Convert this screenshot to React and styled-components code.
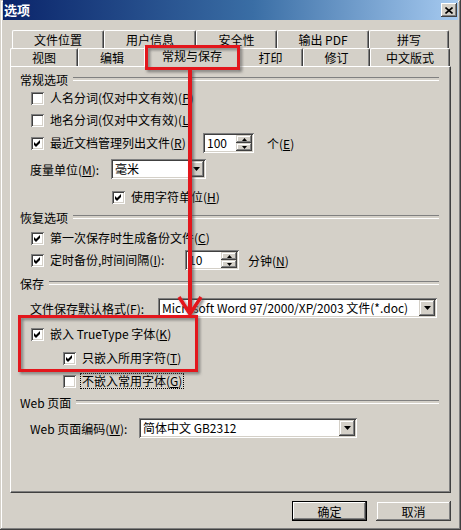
import React from "react";
import styled, { createGlobalStyle } from "styled-components";

const GlobalStyle = createGlobalStyle`
  html, body {
    margin: 0;
    padding: 0;
    background: #d4d0c8;
  }
  body {
    font-family: "Noto Sans CJK SC", "Liberation Sans", sans-serif;
    font-size: 12px;
    color: #000;
  }
  * {
    box-sizing: border-box;
  }
`;

const backTabs = [
  { label: "文件位置", w: 92 },
  { label: "用户信息", w: 92 },
  { label: "安全性", w: 81 },
  { label: "输出 PDF", w: 92 },
  { label: "拼写", w: 80 },
];

const frontTabs = [
  { label: "视图", w: 68 },
  { label: "编辑", w: 68 },
  { label: "常规与保存", w: 92, selected: true },
  { label: "打印", w: 65 },
  { label: "修订", w: 67 },
  { label: "中文版式", w: 80 },
];

const Check = ({ checked }) => (
  <CheckBox>
    {checked && (
      <svg width="13" height="13" viewBox="0 0 13 13">
        <polygon points="3,5 5,7 9,3 9,6 5,10 3,8" fill="#000" />
      </svg>
    )}
  </CheckBox>
);

const SpinBox = ({ value, w }) => (
  <SpinField $w={w}>
    <FieldText>{value}</FieldText>
    <SpinButtons>
      <SpinBtn>
        <svg width="5" height="3" viewBox="0 0 5 3">
          <polygon points="2.5,0 5,3 0,3" fill="#000" />
        </svg>
      </SpinBtn>
      <SpinBtn>
        <svg width="5" height="3" viewBox="0 0 5 3">
          <polygon points="0,0 5,0 2.5,3" fill="#000" />
        </svg>
      </SpinBtn>
    </SpinButtons>
  </SpinField>
);

const Combo = ({ value, w }) => (
  <ComboField $w={w}>
    <FieldText>{value}</FieldText>
    <DropBtn>
      <svg width="7" height="4" viewBox="0 0 7 4">
        <polygon points="0,0 7,0 3.5,4" fill="#000" />
      </svg>
    </DropBtn>
  </ComboField>
);

const App = () => {
  return (
    <>
      <GlobalStyle />
      <Window>
        <TitleBar>
          <Title>选项</Title>
          <CloseButton>
            <svg width="8" height="7" viewBox="0 0 8 7">
              <path d="M0.5 0.5 L7.5 6.5 M7.5 0.5 L0.5 6.5" stroke="#000" strokeWidth="1.6" />
            </svg>
          </CloseButton>
        </TitleBar>

        <Body>
          <TabStrip>
            <TabRow $back>
              {backTabs.map((t) => (
                <Tab key={t.label} $w={t.w}>
                  {t.label}
                </Tab>
              ))}
            </TabRow>
            <TabRow>
              {frontTabs.map((t) => (
                <Tab key={t.label} $w={t.w} $selected={t.selected}>
                  {t.label}
                </Tab>
              ))}
            </TabRow>
          </TabStrip>

          <Panel>
            <Legend $mt={2}>常规选项</Legend>
            <Row $mt={-1} $indent={20}>
              <Check />
              <Label>人名分词(仅对中文有效)(<u>P</u>)</Label>
            </Row>
            <Row $mt={2} $indent={20}>
              <Check />
              <Label>地名分词(仅对中文有效)(<u>L</u>)</Label>
            </Row>
            <Row $mt={3} $indent={20}>
              <CheckGroup $w={172}>
                <Check checked />
                <Label>最近文档管理列出文件(<u>R</u>)</Label>
              </CheckGroup>
              <SpinBox value="100" w={51} />
              <Suffix $ml={13}>个(<u>E</u>)</Suffix>
            </Row>
            <Row $mt={6} $indent={19}>
              <FieldLabel $w={81}>度量单位(<u>M</u>):</FieldLabel>
              <Combo value="毫米" w={95} />
            </Row>
            <Row $mt={8} $indent={101}>
              <Check checked />
              <Label>使用字符单位(<u>H</u>)</Label>
            </Row>

            <Legend $mt={0}>恢复选项</Legend>
            <Row $mt={1} $indent={20}>
              <Check checked />
              <Label>第一次保存时生成备份文件(<u>C</u>)</Label>
            </Row>
            <Row $mt={2} $indent={20}>
              <CheckGroup $w={154}>
                <Check checked />
                <Label>定时备份,时间间隔(<u>I</u>):</Label>
              </CheckGroup>
              <SpinBox value="10" w={54} />
              <Suffix $ml={9}>分钟(<u>N</u>)</Suffix>
            </Row>

            <Legend $mt={3}>保存</Legend>
            <Row $mt={5} $indent={19}>
              <FieldLabel $w={128}>文件保存默认格式(<u>F</u>):</FieldLabel>
              <Combo value="Microsoft Word 97/2000/XP/2003 文件(*.doc)" w={279} />
            </Row>
            <Row $mt={6} $indent={20}>
              <Check checked />
              <Label>嵌入 TrueType 字体(<u>K</u>)</Label>
            </Row>
            <Row $mt={4} $indent={52}>
              <Check checked />
              <Label>只嵌入所用字符(<u>T</u>)</Label>
            </Row>
            <Row $mt={3} $indent={52}>
              <Check />
              <Label $focus>不嵌入常用字体(<u>G</u>)</Label>
            </Row>

            <Legend $mt={1}>Web 页面</Legend>
            <Row $mt={6} $indent={19}>
              <FieldLabel $w={109}>Web 页面编码(<u>W</u>):</FieldLabel>
              <Combo value="简体中文 GB2312" w={218} />
            </Row>
          </Panel>

          <ButtonBar>
            <Button $default>确定</Button>
            <Button>取消</Button>
          </ButtonBar>
        </Body>

        <Overlay width="461" height="530" viewBox="0 0 461 530">
          <defs>
            <filter id="shadow" x="-20%" y="-20%" width="140%" height="140%">
              <feDropShadow dx="2" dy="2" stdDeviation="1.4" floodColor="#555" floodOpacity="0.7" />
            </filter>
          </defs>
          <g filter="url(#shadow)" fill="none" stroke="#e3141b">
            <rect x="146.5" y="46.5" width="92" height="22" strokeWidth="3" />
            <line x1="190" y1="70" x2="190" y2="313" strokeWidth="4" />
            <polyline points="179,297 190,314 201,297" strokeWidth="3.5" />
            <rect x="19.5" y="316.5" width="177" height="54" strokeWidth="3" />
          </g>
        </Overlay>
      </Window>
    </>
  );
};

const Window = styled.div`
  position: relative;
  width: 461px;
  height: 530px;
  padding: 0 3px 3px;
  background: #d4d0c8;
  box-shadow: inset -1px -1px #404040, inset 1px 1px #d4d0c8,
    inset -2px -2px #808080, inset 2px 2px #fff;
  overflow: hidden;
`;

const TitleBar = styled.div`
  height: 20px;
  display: flex;
  align-items: center;
  justify-content: space-between;
  padding: 0 1px 0 1px;
  background: linear-gradient(90deg, #0a246a 0%, #3a6ea5 55%, #a6caf0 100%);
`;

const Title = styled.span`
  color: #fff;
  font-weight: 700;
  font-size: 13px;
  line-height: 20px;
`;

const CloseButton = styled.div`
  width: 16px;
  height: 14px;
  display: flex;
  align-items: center;
  justify-content: center;
  background: #d4d0c8;
  box-shadow: inset -1px -1px #404040, inset 1px 1px #fff,
    inset -2px -2px #808080;
`;

const Body = styled.div`
  padding: 0 7px;
`;

const TabStrip = styled.div`
  margin-top: 11px;
  display: flex;
  flex-direction: column;
`;

const TabRow = styled.div`
  display: flex;
  align-items: flex-end;
  height: ${(p) => (p.$back ? 17 : 18)}px;
  padding-left: ${(p) => (p.$back ? 2 : 0)}px;
`;

const Tab = styled.div`
  position: relative;
  z-index: ${(p) => (p.$selected ? 2 : 0)};
  flex: none;
  width: ${(p) => (p.$selected ? p.$w + 4 : p.$w)}px;
  height: ${(p) => (p.$selected ? 21 : 18)}px;
  margin: 0 ${(p) => (p.$selected ? -2 : 0)}px
    ${(p) => (p.$selected ? -1 : 0)}px;
  display: flex;
  align-items: center;
  justify-content: center;
  padding-bottom: ${(p) => (p.$selected ? 2 : 0)}px;
  background: #d4d0c8;
  border-top: 1px solid #fff;
  border-left: 1px solid #fff;
  border-right: 1px solid #404040;
  border-radius: 2px 2px 0 0;
  box-shadow: inset -1px 0 #808080;
  white-space: nowrap;
  line-height: 16px;
`;

const Panel = styled.div`
  position: relative;
  z-index: 1;
  width: 441px;
  height: 427px;
  background: #d4d0c8;
  border-top: 1px solid #fff;
  border-left: 1px solid #fff;
  border-right: 1px solid #404040;
  border-bottom: 1px solid #404040;
  box-shadow: inset -1px -1px #808080;
  display: flex;
  flex-direction: column;
`;

const Legend = styled.div`
  display: flex;
  align-items: center;
  height: 20px;
  margin: ${(p) => p.$mt}px 11px 0 9px;
  white-space: nowrap;
  &::after {
    content: "";
    flex: 1;
    margin-left: 5px;
    height: 2px;
    border-top: 1px solid #808080;
    border-bottom: 1px solid #fff;
  }
`;

const Row = styled.div`
  display: flex;
  align-items: center;
  height: 20px;
  margin-top: ${(p) => p.$mt}px;
  padding-left: ${(p) => p.$indent}px;
  white-space: nowrap;
`;

const CheckGroup = styled.div`
  display: flex;
  align-items: center;
  width: ${(p) => p.$w}px;
  flex: none;
`;

const CheckBox = styled.span`
  flex: none;
  width: 13px;
  height: 13px;
  display: block;
  background: #fff;
  box-shadow: inset 1px 1px #808080, inset -1px -1px #fff,
    inset 2px 2px #404040, inset -2px -2px #d4d0c8;
  svg {
    display: block;
  }
`;

const Label = styled.span`
  margin-left: 4px;
  line-height: 14px;
  padding: 0 1px;
  border: 1px ${(p) => (p.$focus ? "dotted #000" : "solid transparent")};
`;

const FieldLabel = styled.span`
  flex: none;
  width: ${(p) => p.$w}px;
`;

const Suffix = styled.span`
  margin-left: ${(p) => p.$ml}px;
`;

const sunken = `
  background: #fff;
  box-shadow: inset 1px 1px #808080, inset -1px -1px #fff,
    inset 2px 2px #404040, inset -2px -2px #d4d0c8;
`;

const SpinField = styled.div`
  flex: none;
  width: ${(p) => p.$w}px;
  height: 20px;
  display: flex;
  align-items: stretch;
  padding: 2px;
  ${sunken}
`;

const ComboField = styled.div`
  flex: none;
  width: ${(p) => p.$w}px;
  height: 20px;
  display: flex;
  align-items: stretch;
  padding: 2px;
  ${sunken}
`;

const FieldText = styled.span`
  flex: 1;
  overflow: hidden;
  padding-left: 2px;
  line-height: 16px;
  white-space: nowrap;
`;

const raised = `
  background: #d4d0c8;
  box-shadow: inset -1px -1px #404040, inset 1px 1px #d4d0c8,
    inset -2px -2px #808080, inset 2px 2px #fff;
`;

const SpinButtons = styled.div`
  width: 16px;
  display: flex;
  flex-direction: column;
`;

const SpinBtn = styled.div`
  flex: 1;
  display: flex;
  align-items: center;
  justify-content: center;
  ${raised}
  svg {
    display: block;
  }
`;

const DropBtn = styled.div`
  width: 16px;
  display: flex;
  align-items: center;
  justify-content: center;
  ${raised}
  svg {
    display: block;
  }
`;

const ButtonBar = styled.div`
  display: flex;
  justify-content: flex-end;
  gap: 9px;
  margin-top: 8px;
`;

const Button = styled.div`
  width: 75px;
  height: 20px;
  display: flex;
  align-items: center;
  justify-content: center;
  ${raised}
  ${(p) =>
    p.$default &&
    `
    box-shadow: inset 0 0 0 1px #000, inset -2px -2px #404040,
      inset 2px 2px #fff, inset -3px -3px #808080;
  `}
`;

const Overlay = styled.svg`
  position: absolute;
  top: 0;
  left: 0;
  z-index: 5;
  pointer-events: none;
`;

export default App;
